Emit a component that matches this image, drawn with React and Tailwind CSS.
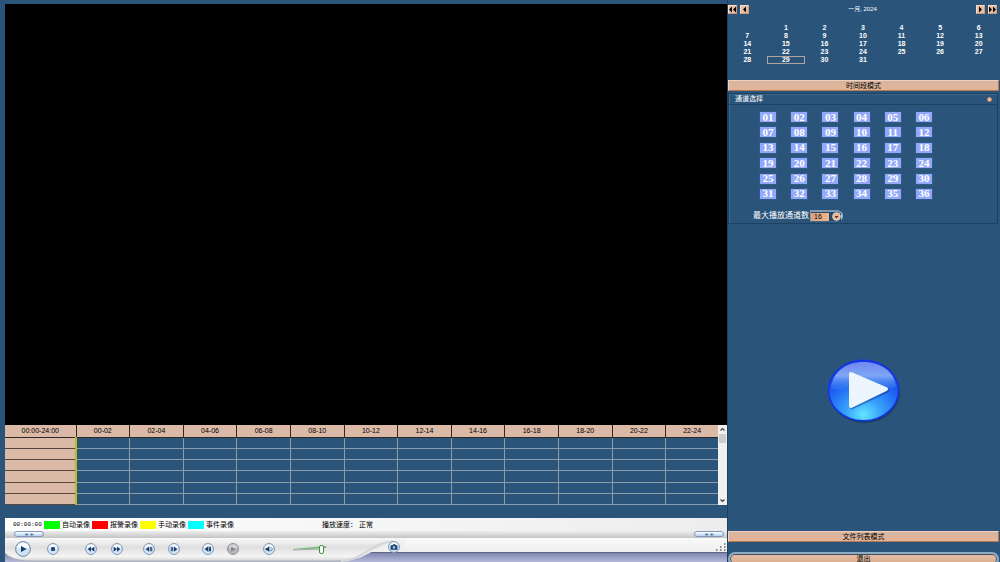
import React, { useState } from "react";

const hours = ["00-02", "02-04", "04-06", "06-08", "08-10", "10-12", "12-14", "14-16", "16-18", "18-20", "20-22", "22-24"];

const legend = [
  { label: "自动录像", color: "bg-[#00ff00]" },
  { label: "报警录像", color: "bg-[#ff0000]" },
  { label: "手动录像", color: "bg-[#ffff00]" },
  { label: "事件录像", color: "bg-[#00ffff]" },
];

const weeks = [0, 1, 2, 3, 4].map((w) =>
  [0, 1, 2, 3, 4, 5, 6].map((d) => {
    const day = w * 7 + d;
    return day >= 1 && day <= 31 ? day : null;
  })
);

const channels = Array.from({ length: 36 }, (_, i) => String(i + 1).padStart(2, "0"));

const glyphs = {
  stop: "M5.500 5.500h5v5h-5z",
  rewind: "M8 4.500v7L3.500 8zM12.500 4.500v7L8 8z",
  forward: "M3.500 4.500v7L8 8zM8 4.500v7l4.500-3.500z",
  stepBack: "M8 4.500v7L3.500 8zM9 5h1.300v6H9zM11 5h1.300v6H11z",
  stepForward: "M8 4.500v7L12.500 8zM5.700 5H7v6H5.700zM3.700 5H5v6H3.700z",
  frameBack: "M8.500 4v8L3.500 8zM9.500 5h2.500v6H9.500z",
  record: "M5.500 4.500l6 3.500-6 3.500z",
  volume: "M3.500 6.500h2L8.500 4v8L5.500 9.500h-2zM10 5.500h1.300v1.300H10zM10 9.200h1.300v1.300H10zM11.500 7.300h1.300v1.300h-1.300z",
  camera: "M3.500 5.500H6L7 4.300h2.500l1 1.200h2v6h-9z",
};

function RoundButton({ name, label, muted }) {
  return (
    <button type="button" aria-label={label} className="size-3 shrink-0">
      <svg viewBox="0 0 16 16" className="size-3">
        <circle cx="8" cy="8" r="7.300" fill={muted ? "#b4b6ba" : "#d2e3f5"} stroke={muted ? "#8e9197" : "#8095b5"} strokeWidth="1.300" />
        <path d="M2.500 7a5.500 5 0 0 1 11 0z" fill={muted ? "#d8d8d8" : "#f7fbff"} />
        <path d={glyphs[name]} fill={muted ? "#85878b" : "#19416f"} />
        {name === "camera" && <circle cx="8" cy="8.500" r="1.700" fill="#9bc8ee" />}
      </svg>
    </button>
  );
}

function Pill({ label }) {
  return (
    <button type="button" aria-label={label} className="flex h-[6px] w-[30px] items-center justify-center rounded-full border border-[#8298b8] bg-linear-to-b from-white to-[#b7d2ee]">
      <svg viewBox="0 0 12 4" className="h-[3px] w-[10px]" fill="#5f80a8">
        <path d="M0 2l3-2v1h2v2H3v1zM7 2l3-2v1h2v2h-2v1z" />
      </svg>
    </button>
  );
}

function ArrowButton({ label, d }) {
  return (
    <button type="button" aria-label={label} className="size-[9px] border border-t-[#f8dccb] border-r-[#c99c80] border-b-[#c99c80] border-l-[#f8dccb] bg-[#eabd9f]">
      <svg viewBox="0 0 7 7" className="size-[7px]" fill="#000"><path d={d} /></svg>
    </button>
  );
}

function Calendar() {
  const [selected, setSelected] = useState(29);
  return (
    <section className="h-[76px] pr-px">
      <header className="flex h-[10px] items-center justify-between pr-px">
        <div className="flex gap-[3px]">
          <ArrowButton label="上一年" d="M3 .5v6L0 3.500zM7 .5v6L4 3.500z" />
          <ArrowButton label="上一月" d="M5 .5v6L2 3.500z" />
        </div>
        <h2 className="text-[6px] leading-[10px] text-white">一月, 2024</h2>
        <div className="flex gap-[3px]">
          <ArrowButton label="下一月" d="M2 .5v6l3-3z" />
          <ArrowButton label="下一年" d="M0 .5v6l3-3zM4 .5v6l3-3z" />
        </div>
      </header>
      <table className="mt-[10px] w-full table-fixed border-collapse text-center text-[7px] leading-[8px] font-bold text-white">
        <tbody>
          {weeks.map((week, w) => (
            <tr key={w} className="h-[8px]">
              {week.map((day, d) => (
                <td key={d} className="p-0">
                  {day && (
                    <button
                      type="button"
                      onClick={() => setSelected(day)}
                      className={`block h-[8px] w-full leading-[8px] ${selected === day ? "outline-1 -outline-offset-1 outline-[#b3a49d]" : ""}`}
                    >
                      {day}
                    </button>
                  )}
                </td>
              ))}
            </tr>
          ))}
        </tbody>
      </table>
    </section>
  );
}

function ModeButton({ children }) {
  return (
    <button type="button" className="block h-[11px] w-full border border-t-[#f2d0bd] border-r-[#b17a55] border-b-[#b17a55] border-l-[#f2d0bd] bg-linear-to-b from-[#d5b5a1] to-[#e5b495] text-center text-[7px] leading-[9px] text-black">
      {children}
    </button>
  );
}

function ChannelPanel() {
  return (
    <section className="mt-[2px] mr-px h-[131px] border border-[#1c4263] shadow-[inset_1px_1px_0_#3b658b]">
      <header className="flex h-[11px] items-center justify-between border-b border-[#1c4263] pr-[5px] pl-[6px]">
        <h2 className="text-[7px] leading-[10px] text-white">通道选择</h2>
        <span className="size-[5px] rounded-full border border-[#c08f70] bg-[#f8bd94]" />
      </header>
      <div className="mt-[7px] ml-[31px] grid h-[87px] w-[172px] grid-cols-[repeat(6,16px)] content-between justify-between">
        {channels.map((n) => (
          <button key={n} type="button" className="h-[10px] w-4 bg-[#92a8fa] text-center font-['Liberation_Serif',serif] text-[11px] leading-[9px] font-bold text-white shadow-[0_0_0_1px_#315b87]">
            {n}
          </button>
        ))}
      </div>
      <div className="mt-[10px] ml-6 flex h-[14px] items-center gap-px">
        <label htmlFor="max-channels" className="text-[8px] leading-[14px] text-white">最大播放通道数</label>
        <div className="relative flex h-[12px] w-[33px] items-center rounded-r-full border-t-2 border-r-2 border-b border-l border-t-[#8299ae] border-r-[#a7bdd0] border-b-[#426889] border-l-[#8299ae] bg-[#24496b]">
          <select id="max-channels" defaultValue="16" className="h-[8px] w-full appearance-none bg-linear-to-r from-[#dba47e] from-0% via-[#f0b58b] via-60% to-[#24496b] to-60% pl-[3px] text-[7px] leading-[8px] text-black outline-none">
            <option>16</option>
            <option>9</option>
            <option>4</option>
          </select>
          <svg viewBox="0 0 10 10" className="pointer-events-none absolute right-0 size-[9px]">
            <circle cx="5" cy="5" r="4.300" fill="#efb48c" stroke="#d8dfe4" strokeWidth="1" />
            <path d="M3 4.500h4L5 7z" fill="#3b2a20" />
          </svg>
        </div>
      </div>
    </section>
  );
}

function BigPlay() {
  return (
    <button type="button" aria-label="播放" className="h-[66px] w-[76px]">
      <svg viewBox="0 0 76 66" className="size-full">
        <defs>
          <radialGradient id="ball" cx="50%" cy="90%" r="85%">
            <stop offset="0" stopColor="#64e6ff" />
            <stop offset=".3" stopColor="#37a2fb" />
            <stop offset=".65" stopColor="#1f66f2" />
            <stop offset="1" stopColor="#1238e0" />
          </radialGradient>
          <linearGradient id="gloss" x1="0" y1="0" x2="0" y2="1">
            <stop offset="0" stopColor="#7088f0" />
            <stop offset=".5" stopColor="#7fa6f6" />
            <stop offset="1" stopColor="#3f8cf5" stopOpacity=".2" />
          </linearGradient>
        </defs>
        <ellipse cx="38.500" cy="34" rx="35.500" ry="31" fill="#14304f" opacity=".6" />
        <ellipse cx="37.500" cy="32.500" rx="35" ry="30.300" fill="url(#ball)" stroke="#1236e4" strokeWidth="1.600" />
        <path d="M5 31C6 14 20 4 37.500 4S69 14 70 29C60 33 55 24 43 23S22 34 5 31z" fill="url(#gloss)" />
        <path d="M26 18L62 33 26 50z" fill="#123b9c" opacity=".5" stroke="#123b9c" strokeWidth="3" strokeLinejoin="round" />
        <path d="M25 16L60 31 25 48z" fill="#edf6ff" stroke="#edf6ff" strokeWidth="4" strokeLinejoin="round" />
      </svg>
    </button>
  );
}

function Timeline() {
  return (
    <div className="flex h-[80px]">
      <table className="h-[80px] flex-1 table-fixed border-collapse text-[7px] leading-[9px] text-black">
        <thead>
          <tr className="h-[12px] bg-[#dab9a6]">
            <th className="w-[71px] border-r border-b border-[#2e2926] p-0 font-normal">00:00-24:00</th>
            {hours.map((h) => (
              <th key={h} className="border-r border-b border-[#2e2926] p-0 font-normal last:border-r-0">{h}</th>
            ))}
          </tr>
        </thead>
        <tbody>
          {[0, 1, 2, 3, 4, 5].map((r) => (
            <tr key={r}>
              <td className="border-r-2 border-b border-r-[#b8bd20] border-b-[#55473f] bg-[#dab9a6] p-0" />
              {hours.map((h) => (
                <td key={h} className="border-r border-b border-[#8b9cac] p-0 last:border-r-0" />
              ))}
            </tr>
          ))}
        </tbody>
      </table>
      <div className="flex w-[9px] flex-col bg-[#f0f0f0]">
        <button type="button" aria-label="向上滚动" className="h-[9px]">
          <svg viewBox="0 0 9 9" className="size-[9px]" fill="none" stroke="#444" strokeWidth="1.200"><path d="M2.500 5.500l2-2 2 2" /></svg>
        </button>
        <div className="mx-px h-[9px] bg-[#cdcdcd]" />
        <button type="button" aria-label="向下滚动" className="mt-auto h-[9px]">
          <svg viewBox="0 0 9 9" className="size-[9px]" fill="none" stroke="#444" strokeWidth="1.200"><path d="M2.500 3.500l2 2 2-2" /></svg>
        </button>
      </div>
    </div>
  );
}

function BarBackdrop() {
  return (
    <div className="absolute inset-0 flex flex-col">
      <div className="h-[13px] bg-linear-to-r from-white to-[#ededed]" />
      <div className="h-[7px] bg-linear-to-b from-[#eeeeee] to-[#c4c4c4]" />
      <div className="relative flex-1 bg-linear-to-b from-[#fafafa] to-[#e6e6e6]">
        <div className="absolute inset-x-0 bottom-0 h-[10px] border-t border-[#5e6684] bg-linear-to-b from-[#8087ad] to-[#b6bbdc]" />
        <svg viewBox="0 0 400 24" className="absolute bottom-0 left-0 h-6 w-[400px]">
          <defs>
            <linearGradient id="metal" x1="0" y1="0" x2="0" y2="1">
              <stop offset="0" stopColor="#fafafa" />
              <stop offset=".4" stopColor="#dfdfdf" />
              <stop offset=".8" stopColor="#f5f5f5" />
              <stop offset="1" stopColor="#d2d2d2" />
            </linearGradient>
          </defs>
          <path d="M0 0H400V4C365 8 362 23 336 23H21Q6 22 0 15z" fill="url(#metal)" />
          <path d="M400 3V14H363Q377 9 388 3z" fill="#f0f0f0" />
          <path d="M336 23C358 22 364 6 388 3" fill="none" stroke="#d6d6d6" strokeWidth="2" />
          <path d="M0 15Q6 22 21 23H336" fill="none" stroke="#aaaeb9" />
        </svg>
      </div>
    </div>
  );
}

function ControlBar() {
  return (
    <div className="relative mt-[13px] h-[44px] overflow-hidden text-black">
      <BarBackdrop />
      <div className="relative flex h-[13px] items-center pl-2 text-[7px] leading-[13px]">
        <time className="w-[31px] font-['Liberation_Mono',monospace] text-[6px]">00:00:00</time>
        <ul className="flex">
          {legend.map((item) => (
            <li key={item.label} className="flex w-12 items-center gap-[2px] whitespace-nowrap">
              <span className={`h-2 w-4 ${item.color}`} />
              {item.label}
            </li>
          ))}
        </ul>
        <p className="ml-[86px] flex gap-[2px]"><span>播放速度：</span><span>正常</span></p>
      </div>
      <div className="relative flex h-[7px] justify-between pr-[3px] pl-[9px]">
        <Pill label="向左扩展" />
        <Pill label="向右扩展" />
      </div>
      <div className="relative flex h-[22px] items-center pl-[10px]">
        <button type="button" aria-label="播放" className="size-4">
          <svg viewBox="0 0 16 16" className="size-4">
            <circle cx="8" cy="8" r="7.400" fill="#cfe1f4" stroke="#7084a3" />
            <path d="M2 7a6 5.500 0 0 1 12 0z" fill="#f7fbff" />
            <path d="M6 5L11.500 8 6 11z" fill="#153c6b" />
          </svg>
        </button>
        <div className="ml-4 flex"><RoundButton name="stop" label="停止" /></div>
        <div className="ml-[26px] flex gap-[14px]">
          <RoundButton name="rewind" label="快退" />
          <RoundButton name="forward" label="快进" />
        </div>
        <div className="ml-5 flex gap-[13px]">
          <RoundButton name="stepBack" label="慢退" />
          <RoundButton name="stepForward" label="慢进" />
        </div>
        <div className="ml-[22px] flex gap-[13px]">
          <RoundButton name="frameBack" label="上一帧" />
          <RoundButton name="record" label="下一帧" muted />
        </div>
        <div className="ml-6 flex"><RoundButton name="volume" label="音量" /></div>
        <div className="relative ml-[17px] h-[10px] w-9">
          <svg viewBox="0 0 36 10" className="absolute inset-0 h-[10px] w-9">
            <path d="M1 5L34 2v2L1 5.500z" fill="#6fb573" />
            <path d="M1 6L32 5" stroke="#999" strokeWidth=".8" />
          </svg>
          <input type="range" aria-label="音量大小" defaultValue="88" className="absolute inset-0 h-[10px] w-9 appearance-none bg-transparent [&::-webkit-slider-thumb]:h-[9px] [&::-webkit-slider-thumb]:w-[5px] [&::-webkit-slider-thumb]:appearance-none [&::-webkit-slider-thumb]:rounded-[2px] [&::-webkit-slider-thumb]:border [&::-webkit-slider-thumb]:border-[#3a913e] [&::-webkit-slider-thumb]:bg-white" />
        </div>
        <div className="ml-[60px] flex self-start pt-[3px]"><RoundButton name="camera" label="抓图" /></div>
        <svg viewBox="0 0 10 8" className="mr-px mb-1 ml-auto h-2 w-[10px]" fill="#8a8a8a">
          <path d="M0 6h1.500v2H0zM4 3h1.500v2H4zM4 6h1.500v2H4zM8 0h1.500v2H8zM8 3h1.500v2H8zM8 6h1.500v2H8z" />
        </svg>
      </div>
    </div>
  );
}

export default function App() {
  return (
    <div className="flex h-screen overflow-hidden bg-[#2a547a] font-['Liberation_Sans','Noto_Sans_CJK_SC',sans-serif]">
      <main className="flex min-w-0 flex-1 flex-col pt-[4px] pl-[5px]">
        <div className="min-h-0 flex-1 bg-black" />
        <Timeline />
        <ControlBar />
      </main>
      <aside className="flex w-[273px] shrink-0 flex-col border-l border-[#1d405f] pt-[4px] pr-px">
        <Calendar />
        <ModeButton>时间段模式</ModeButton>
        <ChannelPanel />
        <div className="flex flex-1 items-center justify-center pt-[26px]">
          <BigPlay />
        </div>
        <ModeButton>文件列表模式</ModeButton>
        <div className="mt-[10px] h-[10px] overflow-hidden">
          <button type="button" className="block h-[14px] w-full rounded-full border-2 border-[#91adc6] bg-linear-to-b from-[#e8c1a9] to-[#d8aa8c] text-center text-[7px] leading-[10px] text-black shadow-[inset_0_0_0_1px_#3c4d60]">
            退出
          </button>
        </div>
      </aside>
    </div>
  );
}
